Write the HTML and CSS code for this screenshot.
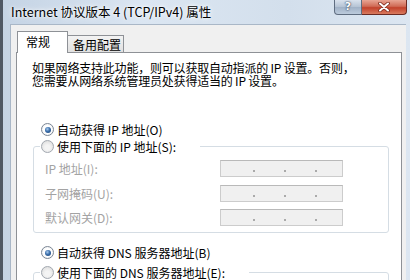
FILE: index.html
```html
<!DOCTYPE html>
<html lang="zh-CN">
<head>
    <meta charset="UTF-8">
    <title>Internet 协议版本 4 (TCP/IPv4) 属性</title>
    <link rel="stylesheet" href="styles.css">
</head>
<body>
    <div class="window">
        <!-- Title bar -->
        <div class="titlebar">
            <span class="title">Internet 协议版本 4 (TCP/IPv4) 属性</span>
            <div class="caption-buttons">
                <span class="btn-help">?</span>
                <span class="btn-close">
                    <svg width="14" height="10" viewBox="0 0 14 10">
                        <path d="M3 1.5 L11 8.5 M11 1.5 L3 8.5" stroke="#7a2a1c" stroke-width="3.6" stroke-linecap="round"/>
                        <path d="M3 1.5 L11 8.5 M11 1.5 L3 8.5" stroke="#ffffff" stroke-width="2" stroke-linecap="round"/>
                    </svg>
                </span>
            </div>
        </div>
        <!-- Dialog body -->
        <div class="client">
            <div class="tabs">
                <span class="tab active">常规</span>
                <span class="tab">备用配置</span>
            </div>
            <div class="panel">
                <p class="intro">如果网络支持此功能，则可以获取自动指派的 IP 设置。否则，<br>您需要从网络系统管理员处获得适当的 IP 设置。</p>

                <div class="radio-row"><span class="radio checked"></span>自动获得 IP 地址(O)</div>
                <fieldset class="group">
                    <legend><div class="radio-row"><span class="radio"></span>使用下面的 IP 地址(S):</div></legend>
                    <div class="field-row">
                        <span class="field-label">IP 地址(I):</span>
                        <span class="ip-box"><i></i><i></i><i></i></span>
                    </div>
                    <div class="field-row">
                        <span class="field-label">子网掩码(U):</span>
                        <span class="ip-box"><i></i><i></i><i></i></span>
                    </div>
                    <div class="field-row">
                        <span class="field-label">默认网关(D):</span>
                        <span class="ip-box"><i></i><i></i><i></i></span>
                    </div>
                </fieldset>

                <div class="radio-row dns"><span class="radio checked"></span>自动获得 DNS 服务器地址(B)</div>
                <fieldset class="group dns-group">
                    <legend><div class="radio-row"><span class="radio"></span>使用下面的 DNS 服务器地址(E):</div></legend>
                </fieldset>
            </div>
        </div>
    </div>
</body>
</html>
```

FILE: styles.css
```css
body {
    margin: 0;
    padding: 0;
    font-family: "Noto Sans CJK SC", "Noto Sans", sans-serif;
    font-size: 12px;
    color: #000;
}
.window {
    width: 410px;
    height: 280px;
    overflow: hidden;
    display: flex;
    flex-direction: column;
    background: linear-gradient(to right, #c4d3e4 0%, #dbe6f2 35%, #d3dfec 70%, #dce6f1 100%);
    box-shadow: inset 3px 0 0 #4f5864;
}
.titlebar {
    height: 24px;
    display: flex;
    justify-content: space-between;
    align-items: flex-start;
    flex-shrink: 0;
}
.title {
    padding: 4px 0 0 11px;
    font-size: 12.5px;
    line-height: 16px;
    text-shadow: 0 0 6px #ffffff, 0 0 3px #ffffff;
}
.caption-buttons {
    display: flex;
    margin-right: 3px;
}
.btn-help {
    width: 28px;
    height: 15px;
    box-sizing: border-box;
    border: 1px solid #5f6d80;
    border-top: none;
    border-radius: 0 0 0 4px;
    background: linear-gradient(#d9e2ed, #b4c2d3 50%, #a0b1c6 51%, #bccbdc);
    color: #ffffff;
    font-family: "DejaVu Sans", sans-serif;
    font-weight: bold;
    font-size: 11px;
    line-height: 14px;
    text-align: center;
    text-shadow: 0 0 2px #2d3f57, 0 0 1px #2d3f57;
}
.btn-close {
    width: 45px;
    height: 15px;
    box-sizing: border-box;
    border: 1px solid #6b2a22;
    border-top: none;
    border-left: none;
    border-radius: 0 0 4px 0;
    background: linear-gradient(#e8a594, #d06b56 45%, #c2412b 55%, #d97b5f);
    display: flex;
    justify-content: center;
    align-items: center;
}
.client {
    flex: 1;
    margin: 0 4px 0 10px;
    padding: 6px 4px 0 5px;
    background: #f0f0f0;
    border-top: 1px solid #a9b7c7;
    border-left: 1px solid #a9b7c7;
    display: flex;
    flex-direction: column;
}
.tabs {
    display: flex;
    align-items: flex-end;
    margin-left: 1px;
}
.tab {
    box-sizing: border-box;
    height: 17px;
    width: 57px;
    margin-left: -1px;
    padding: 2px 0 0 5px;
    line-height: 14px;
    border: 1px solid #8e9196;
    border-bottom: none;
    background: linear-gradient(#f3f3f3, #e0e0e0);
}
.tab.active {
    position: relative;
    z-index: 1;
    margin-left: 0;
    width: 51px;
    height: 22px;
    margin-bottom: -1px;
    padding: 3px 0 0 8px;
    background: #ffffff;
}
.panel {
    flex: 1;
    background: #ffffff;
    border: 1px solid #8e9196;
    padding: 9px 0 0 15px;
}
.intro {
    margin: 0;
    line-height: 12.5px;
    letter-spacing: -0.2px;
}
.radio-row {
    display: flex;
    align-items: center;
    height: 17px;
    padding-left: 9px;
    gap: 3px;
    white-space: nowrap;
}
.panel > .radio-row:first-of-type {
    margin-top: 34px;
}
.radio-row.dns {
    margin-top: 11px;
}
.radio {
    width: 13px;
    height: 13px;
    box-sizing: border-box;
    border-radius: 50%;
    border: 1px solid #a2a8b0;
    background: radial-gradient(circle at 50% 60%, #f4f4f4 30%, #d6d6d6 100%);
    display: flex;
    justify-content: center;
    align-items: center;
}
.radio.checked {
    border-color: #7b8694;
    background: radial-gradient(circle, #ffffff 50%, #dfe3e8 100%);
}
.radio.checked::after {
    content: "";
    width: 6px;
    height: 6px;
    border-radius: 50%;
    background: radial-gradient(circle at 40% 35%, #a9cbef 0%, #3a6eaa 45%, #163f74 100%);
}
.group {
    margin: 0 0 0 1px;
    width: 356px;
    box-sizing: border-box;
    min-width: 0;
    border: 1px solid #d5dde4;
    border-radius: 3px;
    padding: 5px 0 6px 11px;
    display: flex;
    flex-direction: column;
    gap: 7.5px;
}
.group legend {
    margin-left: -5px;
    padding: 0 24px 0 1px;
}
.group legend .radio-row {
    padding-left: 0;
}
.dns-group {
    margin-top: 3px;
    height: 40px;
}
.field-row {
    display: grid;
    grid-template-columns: 175px 123px;
    align-items: center;
    height: 17px;
}
.field-label {
    color: #a3a3a3;
}
.ip-box {
    height: 17px;
    box-sizing: border-box;
    border: 1px solid #cccccc;
    border-top-color: #b9b9b9;
    background: #f0f0f0;
    display: flex;
    align-items: flex-end;
    padding: 0 0 4px 32px;
    gap: 29px;
}
.ip-box i {
    width: 2px;
    height: 2px;
    background: #aaaaaa;
}
```
